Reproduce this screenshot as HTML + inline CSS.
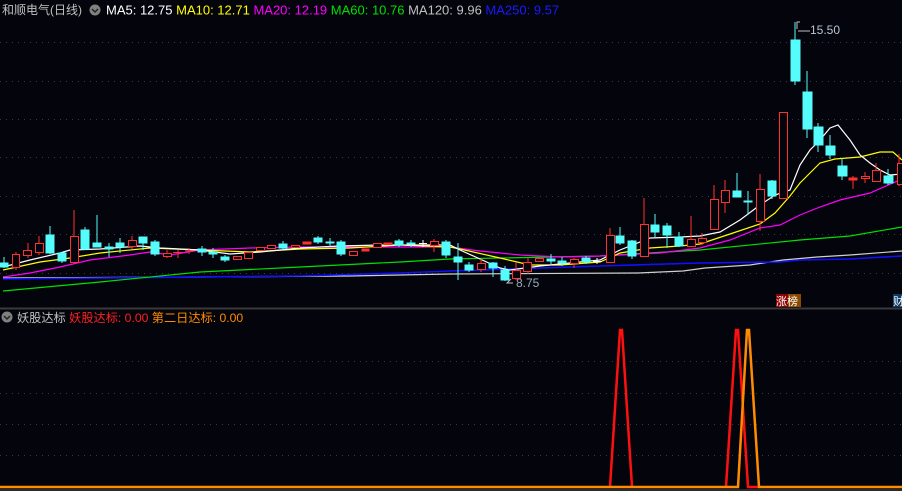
<!DOCTYPE html>
<html><head><meta charset="utf-8"><style>
html,body{margin:0;padding:0;background:#04040c;width:902px;height:491px;overflow:hidden}
svg{display:block}
text{font-family:"Liberation Sans","Noto Sans CJK SC",sans-serif}
</style></head><body>
<svg width="902" height="491" viewBox="0 0 902 491" xmlns="http://www.w3.org/2000/svg">
<rect width="902" height="491" fill="#04040c"/>
<g stroke="#3a3a3a" stroke-dasharray="1 5" stroke-width="1">
<line x1="0" y1="42.5" x2="902" y2="42.5"/><line x1="0" y1="81.5" x2="902" y2="81.5"/>
<line x1="0" y1="119.5" x2="902" y2="119.5"/><line x1="0" y1="157.5" x2="902" y2="157.5"/>
<line x1="0" y1="196.5" x2="902" y2="196.5"/><line x1="0" y1="234.5" x2="902" y2="234.5"/>
<line x1="0" y1="273.5" x2="902" y2="273.5"/>
<line x1="0" y1="361.5" x2="902" y2="361.5"/><line x1="0" y1="393.5" x2="902" y2="393.5"/>
<line x1="0" y1="424.5" x2="902" y2="424.5"/><line x1="0" y1="455.5" x2="902" y2="455.5"/>
</g>
<line x1="0" y1="308.5" x2="902" y2="308.5" stroke="#3a3a3a" stroke-width="2"/>

<g fill="none" stroke-width="1.2">
<polyline stroke="#d0d0d0" points="3,278 200,277 350,276 450,274 638,273 683,271 705,268 750,265 783,260 817,257 850,255 902,251"/>
<polyline stroke="#1010ff" stroke-width="1.6" points="3,279 100,278 300,276 400,273 450,271 600,266 700,263 780,262 800,260 850,259 902,256"/>
<polyline stroke="#00e000" points="3,291 100,282 200,272 300,267 400,262 450,259 600,256 700,250 800,240 850,236 902,227"/>
<polyline stroke="#ff00ff" points="3,277 30,273 60,267 90,260 130,255 150,252 170,255 200,250 250,248 300,247 350,247 450,247 480,251 520,255 560,257 600,256 620,255 660,253 700,248 730,240 760,228 780,225 800,215 820,207 840,200 870,193 902,179"/>
<polyline stroke="#ffff00" points="3,270 40,262 70,258 100,253 150,248 200,250 250,252 300,249 350,248 400,245 450,247 460,249 500,258 530,265 560,265 600,262 620,253 650,248 680,246 700,244 730,234 760,224 775,213 790,196 800,183 810,173 820,163 835,159 860,157 880,152 893,152 902,160"/>
<polyline stroke="#ffffff" points="3,267 30,260 60,253 70,250 100,249 140,246 160,248 200,250 230,254 260,252 300,248 340,246 380,245 420,245 450,245 460,250 480,259 500,268 510,270 540,266 560,264 600,260 620,250 650,238 680,237 700,236 720,232 740,220 760,205 775,195 790,190 800,165 810,150 820,140 830,128 838,125 850,140 860,155 870,163 880,170 890,175 902,174"/>
</g>

<g fill="#54fcfc" stroke="#54fcfc" stroke-width="1">
<line x1="4" y1="257" x2="4" y2="268"/><rect x="0" y="263" width="8" height="4"/>
<line x1="50" y1="226" x2="50" y2="254"/><rect x="46" y="235" width="8" height="18"/>
<line x1="62" y1="252" x2="62" y2="263"/><rect x="58" y="253" width="8" height="8"/>
<line x1="85" y1="227" x2="85" y2="250"/><rect x="81" y="230" width="8" height="19"/>
<line x1="97" y1="215" x2="97" y2="247"/><rect x="93" y="243" width="8" height="4"/>
<line x1="109" y1="243" x2="109" y2="257"/><rect x="105" y="247" width="8" height="2"/>
<line x1="120" y1="238" x2="120" y2="253"/><rect x="116" y="243" width="8" height="4"/>
<line x1="143" y1="237" x2="143" y2="250"/><rect x="139" y="237" width="8" height="6"/>
<line x1="155" y1="240" x2="155" y2="256"/><rect x="151" y="242" width="8" height="12"/>
<line x1="202" y1="246" x2="202" y2="256"/><rect x="198" y="249" width="8" height="3"/>
<line x1="213" y1="248" x2="213" y2="258"/><rect x="209" y="252" width="8" height="2"/>
<line x1="225" y1="255" x2="225" y2="262"/><rect x="221" y="257" width="8" height="3"/>
<line x1="283" y1="241" x2="283" y2="250"/><rect x="279" y="244" width="8" height="4"/>
<line x1="318" y1="236" x2="318" y2="244"/><rect x="314" y="238" width="8" height="4"/>
<line x1="330" y1="238" x2="330" y2="247"/><rect x="326" y="242" width="8" height="1"/>
<line x1="341" y1="240" x2="341" y2="256"/><rect x="337" y="242" width="8" height="12"/>
<line x1="399" y1="239" x2="399" y2="247"/><rect x="395" y="241" width="8" height="4"/>
<line x1="411" y1="240" x2="411" y2="247"/><rect x="407" y="243" width="8" height="1"/>
<line x1="446" y1="240" x2="446" y2="258"/><rect x="442" y="242" width="8" height="13"/>
<line x1="458" y1="243" x2="458" y2="280"/><rect x="454" y="257" width="8" height="5"/>
<line x1="469" y1="262" x2="469" y2="272"/><rect x="465" y="265" width="8" height="5"/>
<line x1="493" y1="262" x2="493" y2="277"/><rect x="489" y="263" width="8" height="5"/>
<line x1="505" y1="266" x2="505" y2="281"/><rect x="501" y="270" width="8" height="10"/>
<line x1="551" y1="254" x2="551" y2="264"/><rect x="547" y="259" width="8" height="2"/>
<line x1="562" y1="257" x2="562" y2="266"/><rect x="558" y="261" width="8" height="2"/>
<line x1="586" y1="256" x2="586" y2="264"/><rect x="582" y="258" width="8" height="4"/>
<line x1="620" y1="227" x2="620" y2="245"/><rect x="616" y="236" width="8" height="7"/>
<line x1="632" y1="240" x2="632" y2="259"/><rect x="628" y="241" width="8" height="15"/>
<line x1="655" y1="214" x2="655" y2="237"/><rect x="651" y="225" width="8" height="7"/>
<line x1="667" y1="223" x2="667" y2="248"/><rect x="663" y="226" width="8" height="9"/>
<line x1="679" y1="232" x2="679" y2="247"/><rect x="675" y="237" width="8" height="9"/>
<line x1="737" y1="173" x2="737" y2="197"/><rect x="733" y="191" width="8" height="6"/>
<line x1="748" y1="191" x2="748" y2="215"/><rect x="744" y="201" width="8" height="1"/>
<line x1="772" y1="180" x2="772" y2="199"/><rect x="768" y="181" width="8" height="15"/>
<line x1="795" y1="22" x2="795" y2="85"/><rect x="791" y="40" width="9" height="41"/>
<line x1="807" y1="71" x2="807" y2="138"/><rect x="803" y="92" width="9" height="37"/>
<line x1="818" y1="123" x2="818" y2="152"/><rect x="814" y="127" width="9" height="18"/>
<line x1="830" y1="135" x2="830" y2="159"/><rect x="826" y="146" width="9" height="9"/>
<line x1="842" y1="158" x2="842" y2="180"/><rect x="838" y="166" width="9" height="10"/>
<line x1="888" y1="169" x2="888" y2="185"/><rect x="884" y="176" width="9" height="7"/>
</g>

<g fill="none" stroke="#ff3030" stroke-width="1">
<line x1="16" y1="252" x2="16" y2="270"/><rect x="12.5" y="254.5" width="7" height="13" fill="#04040c"/>
<line x1="28" y1="243" x2="28" y2="258"/><rect x="23.5" y="250.5" width="8" height="5" fill="#04040c"/>
<line x1="39" y1="236" x2="39" y2="255"/><rect x="35.5" y="243.5" width="8" height="9" fill="#04040c"/>
<line x1="74" y1="210" x2="74" y2="263"/><rect x="70.5" y="236.5" width="8" height="26" fill="#04040c"/>
<line x1="132" y1="236" x2="132" y2="249"/><rect x="128.5" y="240.5" width="8" height="6" fill="#04040c"/>
<line x1="167" y1="250" x2="167" y2="258"/><rect x="163.5" y="253.5" width="8" height="3" fill="#04040c"/>
<line x1="178" y1="250" x2="178" y2="258"/><line x1="173" y1="252.5" x2="183" y2="252.5"/>
<line x1="189" y1="248" x2="189" y2="254"/><line x1="185" y1="251" x2="194" y2="251"/>
<rect x="233.5" y="256.5" width="8" height="3" fill="#04040c"/>
<rect x="244.5" y="252.5" width="8" height="6" fill="#04040c"/>
<rect x="256.5" y="247.5" width="8" height="3" fill="#04040c"/>
<rect x="267.5" y="245.5" width="8" height="3" fill="#04040c"/>
<rect x="291.5" y="245.5" width="8" height="2" fill="#04040c"/>
<rect x="303" y="242" width="8" height="2" fill="#ff3030"/>
<rect x="349.5" y="251.5" width="8" height="4" fill="#04040c"/>
<rect x="362" y="249" width="7" height="2" fill="#ff3030"/>
<rect x="373.5" y="243.5" width="8" height="4" fill="#04040c"/>
<rect x="384" y="243" width="8" height="1.5" fill="#ff3030"/>
<line x1="434" y1="239" x2="434" y2="252"/><rect x="430.5" y="241.5" width="8" height="4" fill="#04040c"/>
<line x1="481" y1="259" x2="481" y2="272"/><rect x="477.5" y="263.5" width="8" height="6" fill="#04040c"/>
<line x1="516" y1="262" x2="516" y2="280"/><rect x="512.5" y="270.5" width="8" height="8" fill="#04040c"/>
<line x1="528" y1="258" x2="528" y2="274"/><rect x="523.5" y="262.5" width="8" height="9" fill="#04040c"/>
<rect x="535.5" y="258.5" width="8" height="3" fill="#04040c"/>
<line x1="574" y1="258" x2="574" y2="268"/><rect x="570.5" y="259.5" width="8" height="4" fill="#04040c"/>
<line x1="610" y1="228" x2="610" y2="263"/><rect x="606.5" y="235.5" width="8" height="27" fill="#04040c"/>
<line x1="644" y1="198" x2="644" y2="257"/><rect x="640.5" y="224.5" width="8" height="32" fill="#04040c"/>
<line x1="691" y1="216" x2="691" y2="247"/><rect x="687.5" y="239.5" width="8" height="7" fill="#04040c"/>
<line x1="702" y1="233" x2="702" y2="245"/><rect x="698.5" y="238.5" width="8" height="4" fill="#04040c"/>
<line x1="714" y1="185" x2="714" y2="230"/><rect x="710.5" y="199.5" width="8" height="30" fill="#04040c"/>
<line x1="725" y1="180" x2="725" y2="213"/><rect x="721.5" y="190.5" width="8" height="12" fill="#04040c"/>
<line x1="760" y1="174" x2="760" y2="231"/><rect x="756.5" y="189.5" width="8" height="32" fill="#04040c"/>
<rect x="779.5" y="112.5" width="8" height="86" fill="#04040c"/>
<line x1="853" y1="176" x2="853" y2="189"/><rect x="849" y="178" width="8" height="2" fill="#ff3030"/>
<line x1="865" y1="172" x2="865" y2="183"/><rect x="861.5" y="176.5" width="8" height="2" fill="#04040c"/>
<line x1="876" y1="163" x2="876" y2="182"/><rect x="872.5" y="170.5" width="8" height="11" fill="#04040c"/>
<line x1="899" y1="154" x2="899" y2="186"/><rect x="897.5" y="163.5" width="8" height="21" fill="#04040c"/>
</g>
<g stroke="#ffffff" stroke-width="1">
<line x1="419" y1="243.5" x2="427" y2="243.5"/><line x1="423" y1="240" x2="423" y2="247"/>
<line x1="593" y1="261.5" x2="602" y2="261.5"/><line x1="597" y1="258" x2="597" y2="264"/>
</g>

<path d="M797 29 L797 22 L800 22 M798 31 L810 31" stroke="#c0c0c0" fill="none"/>
<text x="810" y="34" font-size="12" fill="#b8c4d0">15.50</text>
<path d="M511 279 L507 283 L513 283" stroke="#c0c0c0" fill="none"/>
<text x="516" y="287" font-size="12" fill="#9aa8b8">8.75</text>

<rect x="776" y="294" width="12" height="13" fill="#8b0000"/>
<rect x="788" y="294" width="13" height="13" fill="#8b4a00"/>
<text x="776" y="305" font-size="11" fill="#fff">涨榜</text>
<rect x="893" y="294" width="9" height="13" fill="#0a3a6a"/>
<text x="893" y="305" font-size="11" fill="#fff">财</text>

<text x="2" y="14" font-size="12" fill="#c0c0c0">和顺电气(日线)</text>
<circle cx="95" cy="10" r="5.5" fill="#808080"/>
<path d="M92 9 L95 12 L98 9" stroke="#222" stroke-width="1.5" fill="none"/>
<text x="106" y="14.5" font-size="13"><tspan fill="#ffffff">MA5: 12.75 </tspan><tspan fill="#ffff00">MA10: 12.71 </tspan><tspan fill="#ff00ff">MA20: 12.19 </tspan><tspan fill="#00e000">MA60: 10.76 </tspan><tspan fill="#c0c0c0">MA120: 9.96 </tspan><tspan fill="#1a1aff">MA250: 9.57</tspan></text>

<circle cx="7" cy="317" r="5.5" fill="#808080"/>
<path d="M4 316 L7 319 L10 316" stroke="#222" stroke-width="1.5" fill="none"/>
<text x="17" y="322" font-size="12.2"><tspan fill="#c0c0c0">妖股达标 </tspan><tspan fill="#ff2020">妖股达标: 0.00 </tspan><tspan fill="#ff8c00">第二日达标: 0.00</tspan></text>

<g fill="none" stroke-width="2.5">
<polyline stroke="#ff1010" points="610,487 620,330 622,330 632,487"/>
<polyline stroke="#ff1010" points="726,487 736,330 738,330 748,487 758,487"/>
<polyline stroke="#ff8c00" points="0,487 738,487 747,330 749,330 759,487 902,487"/>
</g>
<line x1="0" y1="490" x2="902" y2="490" stroke="#2a2a2a" stroke-width="2"/>
</svg>
</body></html>
